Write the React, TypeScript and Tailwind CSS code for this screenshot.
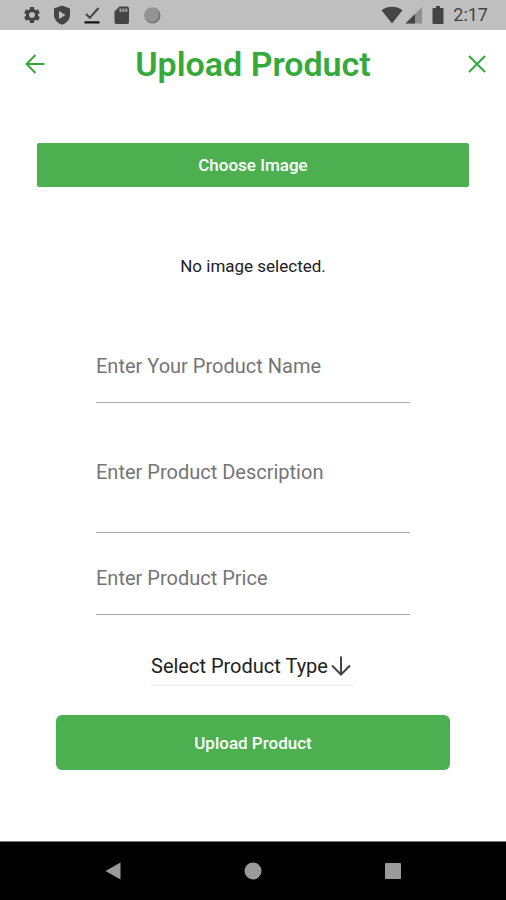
import { useState } from "react";
import { MdSettings } from "react-icons/md";

const PRODUCT_TYPES = ["Electronics", "Clothing", "Groceries", "Other"];

const FIELD_CLASS =
  "block w-full resize-none rounded-none border-b border-[#a6a6a6] bg-transparent text-[20px] leading-6 text-[#212121] outline-none placeholder:text-[#757575]";

function StatusBar() {
  return (
    <div className="flex h-[30px] items-center justify-between bg-[#bfbfbf] pl-[22px] pr-[18px] text-[#444]">
      <div className="flex items-center gap-[10px]">
        <MdSettings className="h-5 w-5" />
        {/* Play Protect shield */}
        <svg viewBox="0 0 20 20" className="h-5 w-5" fill="currentColor">
          <path
            fillRule="evenodd"
            d="M10 .5 18 3.500v6.200c0 4.700-3.200 8.300-8 10-4.800-1.700-8-5.300-8-10V3.500Zm-3 5.500v8l6.500-4Z"
          />
        </svg>
        <svg viewBox="0 0 20 20" className="h-5 w-5" fill="none">
          <path d="m4 9 3.800 3.800L16.500 3" stroke="#444" strokeWidth="2" />
          <path d="M2.500 17.400h15" stroke="#111" strokeWidth="2.200" />
        </svg>
        {/* SD card */}
        <svg viewBox="0 0 20 20" className="h-5 w-5">
          <path d="M7.500 1.500H15a2 2 0 0 1 2 2v13.500a2 2 0 0 1-2 2H4.500a2 2 0 0 1-2-2V6.500Z" fill="#444" />
          <path d="M7.500 3.500h2v3.500h-2Zm2.900 0h2v3.500h-2Zm2.900 0h2v3.500h-2Z" fill="#a0a0a0" />
        </svg>
        <svg viewBox="0 0 20 20" className="h-5 w-5">
          <circle cx="10.500" cy="10.500" r="8" fill="#777" />
          <circle cx="9.600" cy="9.800" r="7.200" fill="#949494" />
        </svg>
      </div>
      <div className="flex items-center">
        <svg viewBox="0 0 22 18" className="h-[18px] w-[22px]" fill="currentColor">
          <path d="M.5 4.300C6.500-.3 15.500-.3 21.500 4.300L11 17.500Z" />
        </svg>
        <svg viewBox="0 0 20 18" className="h-[18px] w-5">
          <path d="M2.500 17.500 19 1v16.500Z" fill="#8f8f8f" />
          <path d="M2.500 17.500 12 8v9.500Z" fill="#444" />
        </svg>
        <svg viewBox="0 0 22 22" className="ml-1 h-[22px] w-[22px]" fill="currentColor">
          <path d="M9 2h4v2h2.500a1 1 0 0 1 1 1v14a1 1 0 0 1-1 1h-9a1 1 0 0 1-1-1V5a1 1 0 0 1 1-1H9Z" />
        </svg>
        <span className="ml-1 text-[18px] leading-6">2:17</span>
      </div>
    </div>
  );
}

function NavigationBar() {
  return (
    <nav className="flex h-[59px] items-center justify-center gap-[116px] border-t border-[#777] bg-black text-[#9a9a9a]">
      <button type="button" aria-label="Back">
        <svg viewBox="0 0 24 24" className="h-6 w-6" fill="currentColor">
          <path d="M4.500 12 19.500 3.500v17Z" />
        </svg>
      </button>
      <button type="button" aria-label="Home">
        <svg viewBox="0 0 24 24" className="h-6 w-6" fill="currentColor">
          <circle cx="12" cy="12" r="8.500" />
        </svg>
      </button>
      <button type="button" aria-label="Recent apps">
        <svg viewBox="0 0 24 24" className="h-6 w-6" fill="currentColor">
          <rect x="4" y="4" width="16" height="16" rx="1" />
        </svg>
      </button>
    </nav>
  );
}

export default function App() {
  const [productType, setProductType] = useState("");

  return (
    <div className="flex min-h-screen flex-col bg-white font-[Roboto,sans-serif]">
      <StatusBar />

      <header className="flex h-[68px] items-center justify-between px-[15px] text-[#35a93c]">
        <button type="button" aria-label="Go back" className="flex w-[34px] justify-end">
          <svg viewBox="0 0 28 28" className="h-7 w-7" fill="none" stroke="currentColor" strokeWidth="2">
            <path d="M23.500 14H6M14.500 5 5.500 14l9 9" />
          </svg>
        </button>
        <h1 className="text-[34px] font-semibold leading-10">Upload Product</h1>
        <button type="button" aria-label="Close" className="flex w-[34px] justify-end">
          <svg viewBox="0 0 28 28" className="h-7 w-7" fill="none" stroke="currentColor" strokeWidth="2">
            <path d="m6 6 16 16M22 6 6 22" />
          </svg>
        </button>
      </header>

      <form
        className="flex flex-1 flex-col pt-[45px]"
        onSubmit={(e) => e.preventDefault()}
      >
        <div className="px-[37px]">
          <button
            type="button"
            className="h-11 w-full rounded-xs bg-[#4caf50] pt-0.5 text-[17px] font-medium text-white"
          >
            Choose Image
          </button>
        </div>

        <p className="mt-[67px] text-center text-[17px] leading-6 text-[#212121]">
          No image selected.
        </p>

        <div className="mt-[76px] px-24">
          <input
            type="text"
            aria-label="Product name"
            placeholder="Enter Your Product Name"
            className={`${FIELD_CLASS} h-[49px] pb-6`}
          />
          <textarea
            aria-label="Product description"
            placeholder="Enter Product Description"
            rows={2}
            className={`${FIELD_CLASS} mt-[57px] h-[73px]`}
          />
          <input
            type="text"
            inputMode="decimal"
            aria-label="Product price"
            placeholder="Enter Product Price"
            className={`${FIELD_CLASS} mt-[33px] h-[49px] pb-6`}
          />
        </div>

        <div className="mt-[35px] flex justify-center">
          <div className="grid w-[204px] items-center border-b border-[#ededed] pb-1">
            <select
              aria-label="Product type"
              value={productType}
              onChange={(e) => setProductType(e.target.value)}
              className="col-start-1 row-start-1 h-[31px] w-full appearance-none bg-transparent pr-6 text-[20px] text-[#212121] outline-none"
            >
              <option value="" disabled>
                Select Product Type
              </option>
              {PRODUCT_TYPES.map((type) => (
                <option key={type} value={type}>
                  {type}
                </option>
              ))}
            </select>
            <svg
              viewBox="0 0 28 28"
              className="pointer-events-none col-start-1 row-start-1 h-7 w-7 justify-self-end text-[#444]"
              fill="none"
              stroke="currentColor"
              strokeWidth="2"
            >
              <path d="M14 4.500V22M5 13.500l9 9 9-9" />
            </svg>
          </div>
        </div>

        <div className="mb-[71px] mt-[29px] px-14">
          <button
            type="submit"
            className="h-[55px] w-full rounded-md bg-[#4caf50] pt-0.5 text-[17px] font-medium text-white"
          >
            Upload Product
          </button>
        </div>
      </form>

      <NavigationBar />
    </div>
  );
}
